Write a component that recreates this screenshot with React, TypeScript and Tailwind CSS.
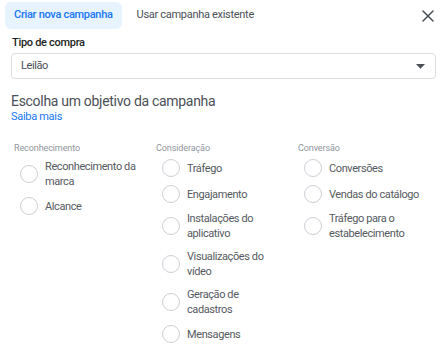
import { X } from 'lucide-react';

const columns: { title: string; textWidth: string; items: string[] }[] = [
  { title: 'Reconhecimento', textWidth: 'w-[110px]', items: ['Reconhecimento da marca', 'Alcance'] },
  {
    title: 'Consideração',
    textWidth: 'w-[94px]',
    items: ['Tráfego', 'Engajamento', 'Instalações do aplicativo', 'Visualizações do vídeo', 'Geração de cadastros', 'Mensagens'],
  },
  { title: 'Conversão', textWidth: 'w-[94px]', items: ['Conversões', 'Vendas do catálogo', 'Tráfego para o estabelecimento'] },
];

function Radio({ label, textWidth }: { label: string; textWidth: string }) {
  return (
    <label className="flex items-center gap-[7px] cursor-pointer">
      <span className="w-[18px] h-[18px] shrink-0 rounded-full border border-[#ccd0d5] bg-white" />
      <span className={`${textWidth} text-[11px] leading-[15px] tracking-[-0.4px] text-[#555a61]`}>{label}</span>
    </label>
  );
}

export default function App() {
  return (
    <div className="w-[447px] h-[346px] bg-white overflow-hidden font-['Roboto',sans-serif]">
      <div className="flex items-center pl-[5px] pr-[9px] pt-[2px]">
        <button className="h-[27px] px-[9px] rounded-md bg-[#e7f3ff] text-[11px] tracking-[-0.3px] font-medium text-[#1877f2]">
          Criar nova campanha
        </button>
        <button className="h-[27px] px-[15px] text-[11px] tracking-[-0.3px] text-[#4b4f56]">Usar campanha existente</button>
        <X className="ml-auto w-[20px] h-[20px] text-[#4b4f56]" strokeWidth={1.8} />
      </div>

      <div className="px-[11px] pt-[7px]">
        <div className="text-[11px] font-medium tracking-[-0.3px] text-[#1c1e21] pl-[1px] leading-[14px]">Tipo de compra</div>
        <div className="mt-[3px] h-[26px] flex items-center justify-between border border-[#dadde1] rounded-[4px] pl-[9px] pr-[10px]">
          <span className="text-[11px] tracking-[-0.4px] text-[#4b4f56]">Leilão</span>
          <svg width="9" height="5" viewBox="0 0 9 5">
            <path d="M0 0 H9 L4.5 4.8 Z" fill="#4b4f56" />
          </svg>
        </div>

        <h2 className="mt-[13px] text-[14px] leading-[18px] tracking-[-0.3px] text-[#4b4f56]">Escolha um objetivo da campanha</h2>
        <a className="block text-[11px] leading-[13px] tracking-[-0.3px] text-[#1877f2]">Saiba mais</a>

        <div className="mt-[19px] pl-[3px] grid grid-cols-[142px_142px_1fr]">
          {columns.map((col) => (
            <div key={col.title}>
              <div className="text-[9px] leading-[12px] tracking-[-0.1px] text-[#90949c]">{col.title}</div>
              <div className="mt-[5px] pl-[6px] flex flex-col gap-[8px]">
                {col.items.map((it) => (
                  <Radio key={it} label={it} textWidth={col.textWidth} />
                ))}
              </div>
            </div>
          ))}
        </div>
      </div>
    </div>
  );
}
